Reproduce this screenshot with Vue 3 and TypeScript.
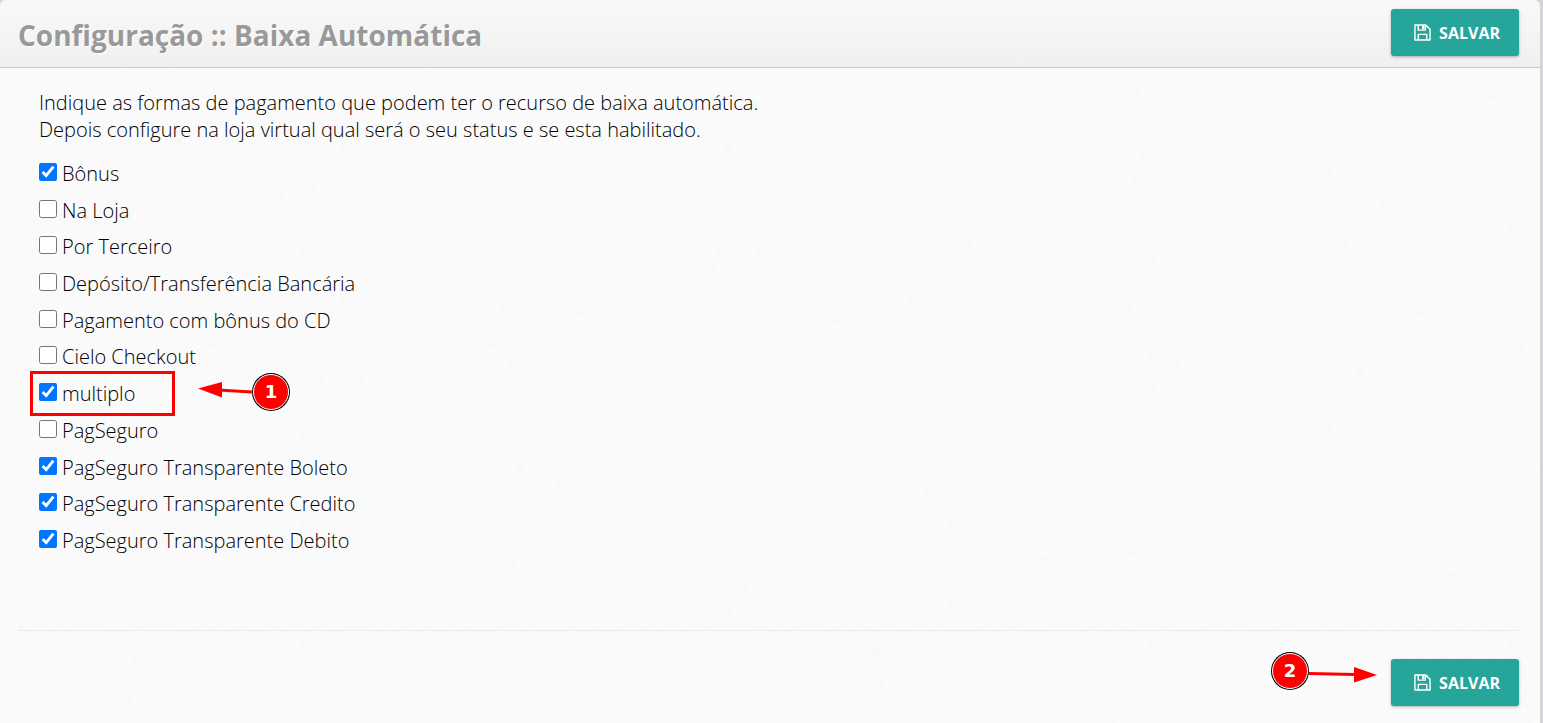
<script setup lang="ts">
import { ref } from 'vue'

interface PaymentMethod {
  id: string
  label: string
  enabled: boolean
  highlighted?: boolean
}

const methods = ref<PaymentMethod[]>([
  { id: 'bonus', label: 'Bônus', enabled: true },
  { id: 'na-loja', label: 'Na Loja', enabled: false },
  { id: 'por-terceiro', label: 'Por Terceiro', enabled: false },
  { id: 'deposito', label: 'Depósito/Transferência Bancária', enabled: false },
  { id: 'bonus-cd', label: 'Pagamento com bônus do CD', enabled: false },
  { id: 'cielo', label: 'Cielo Checkout', enabled: false },
  { id: 'multiplo', label: 'multiplo', enabled: true, highlighted: true },
  { id: 'pagseguro', label: 'PagSeguro', enabled: false },
  { id: 'ps-boleto', label: 'PagSeguro Transparente Boleto', enabled: true },
  { id: 'ps-credito', label: 'PagSeguro Transparente Credito', enabled: true },
  { id: 'ps-debito', label: 'PagSeguro Transparente Debito', enabled: true },
])
</script>

<template>
  <main class="panel">
    <svg class="paper" aria-hidden="true">
      <filter id="paper-grain" x="0" y="0" width="100%" height="100%">
        <feTurbulence type="fractalNoise" baseFrequency="0.12" numOctaves="3" seed="4" stitchTiles="stitch" />
        <feColorMatrix values="0 0 0 0 0.6  0 0 0 0 0.6  0 0 0 0 0.6  0.1 0 0 0 -0.03" />
      </filter>
      <rect width="100%" height="100%" filter="url(#paper-grain)" />
    </svg>

    <header class="header">
      <h1 class="title">Configuração :: Baixa Automática</h1>
      <button type="button" class="save">
        <svg class="save-icon" viewBox="0 0 18 18" aria-hidden="true">
          <path d="M1 1h11.5L17 5.500v11.500H1z M4.500 1v5.500h7.500V1 M4.500 17v-6h9v6" />
          <path class="solid" d="M8.500 1.500h2.500v4H8.500z" />
        </svg>
        <span>SALVAR</span>
      </button>
    </header>

    <form class="content" @submit.prevent>
      <p class="intro">
        Indique as formas de pagamento que podem ter o recurso de baixa automática.<br />
        Depois configure na loja virtual qual será o seu status e se esta habilitado.
      </p>
      <ul class="methods">
        <li v-for="method in methods" :key="method.id" class="method">
          <input :id="method.id" v-model="method.enabled" type="checkbox" class="check" />
          <label :for="method.id">{{ method.label }}</label>
          <template v-if="method.highlighted">
            <span class="outline"></span>
            <span class="callout callout-row">
              <svg class="arrow" viewBox="0 0 54 24" aria-hidden="true">
                <path class="line" d="M20 10 54 12" />
                <path class="head" d="M0 8.500 24 2V17.500z" />
              </svg>
              <span class="badge">1</span>
            </span>
          </template>
        </li>
      </ul>
    </form>

    <footer class="footer">
      <div class="save-anchor">
        <span class="callout callout-save">
          <span class="badge">2</span>
          <svg class="arrow arrow-right" viewBox="0 0 68 24" aria-hidden="true">
            <path class="line" d="M0 14.500 46 15.500" />
            <path class="head" d="M68 16 45 8V23.500z" />
          </svg>
        </span>
        <button type="button" class="save">
          <svg class="save-icon" viewBox="0 0 18 18" aria-hidden="true">
            <path d="M1 1h11.5L17 5.500v11.500H1z M4.500 1v5.500h7.500V1 M4.500 17v-6h9v6" />
            <path class="solid" d="M8.500 1.500h2.500v4H8.500z" />
          </svg>
          <span>SALVAR</span>
        </button>
      </div>
    </footer>
  </main>
</template>

<style>
body {
  margin: 0;
  background: #d3d4dc;
}
</style>

<style scoped>
.panel {
  position: relative;
  box-sizing: border-box;
  min-height: 100vh;
  margin-right: 3px;
  overflow: hidden;
  display: flex;
  flex-direction: column;
  background: #fbfbfb;
  border-radius: 6px 6px 0 0;
  color: #000;
  font-family: "Open Sans", "Noto Sans", sans-serif;
  font-size: 20px;
  font-weight: 300;
  line-height: 27px;
}
.paper {
  position: absolute;
  inset: 0;
  width: 100%;
  height: 100%;
}
.header {
  position: relative;
  display: flex;
  align-items: flex-start;
  justify-content: space-between;
  padding: 9px 21px 11px 18px;
  border-bottom: 1px solid #c9cbcb;
  background: linear-gradient(#f9f9f9, #f0f0f0);
}
.title {
  margin: 0;
  padding-top: 6px;
  color: #999;
  font-size: 28px;
  font-weight: 700;
  line-height: 40px;
  text-shadow: 1px 1px 0 #fff;
}
.save {
  display: flex;
  align-items: center;
  gap: 8px;
  height: 47px;
  padding: 0 19px 0 23px;
  border: 0;
  border-radius: 3px;
  background: #26a69a;
  box-shadow: 0 1px 3px rgba(0, 0, 0, 0.3);
  color: #fff;
  font-family: inherit;
  font-size: 16px;
  font-weight: 700;
  cursor: pointer;
}
.save-icon {
  width: 17px;
  height: 17px;
  fill: none;
  stroke: #fff;
  stroke-width: 1.5;
  stroke-linejoin: round;
}
.save-icon .solid {
  fill: #fff;
  stroke: none;
}
.content {
  position: relative;
  flex: 1;
  padding: 21px 39px 0;
}
.intro {
  margin: 0;
}
.methods {
  display: flex;
  flex-direction: column;
  justify-content: space-between;
  min-height: 394px;
  margin: 17px 0 0;
  padding: 0;
  list-style: none;
}
.method {
  position: relative;
  display: flex;
  align-items: flex-start;
  gap: 5px;
  width: fit-content;
}
.check {
  width: 18px;
  height: 18px;
  margin: 3px 0 0;
  accent-color: #0075ff;
}
.outline {
  position: absolute;
  top: -9px;
  left: -9px;
  box-sizing: border-box;
  width: 145px;
  height: 45px;
  border: 3px solid #f00;
  pointer-events: none;
}
.callout {
  position: absolute;
  display: flex;
  align-items: center;
}
.callout-row {
  top: -7px;
  left: 159px;
}
.callout-save {
  top: -7px;
  right: 142px;
}
.arrow {
  width: 54px;
  height: 24px;
}
.arrow-right {
  width: 68px;
}
.line {
  stroke: #f00;
  stroke-width: 3;
}
.head {
  fill: #f00;
}
.badge {
  display: grid;
  place-items: center;
  width: 34px;
  height: 34px;
  border: 1px solid #fff;
  border-radius: 50%;
  background: #f00;
  box-shadow: 0 0 0 1px #000;
  margin: 1px;
  color: #fff;
  font-family: "DejaVu Sans", sans-serif;
  font-size: 18px;
  font-weight: 700;
  line-height: 24px;
}
.footer {
  position: relative;
  display: flex;
  justify-content: flex-end;
  margin: 0 21px 0 18px;
  padding: 28px 0 17px;
  border-top: 1px solid #ebebeb;
}
.save-anchor {
  position: relative;
}
</style>
